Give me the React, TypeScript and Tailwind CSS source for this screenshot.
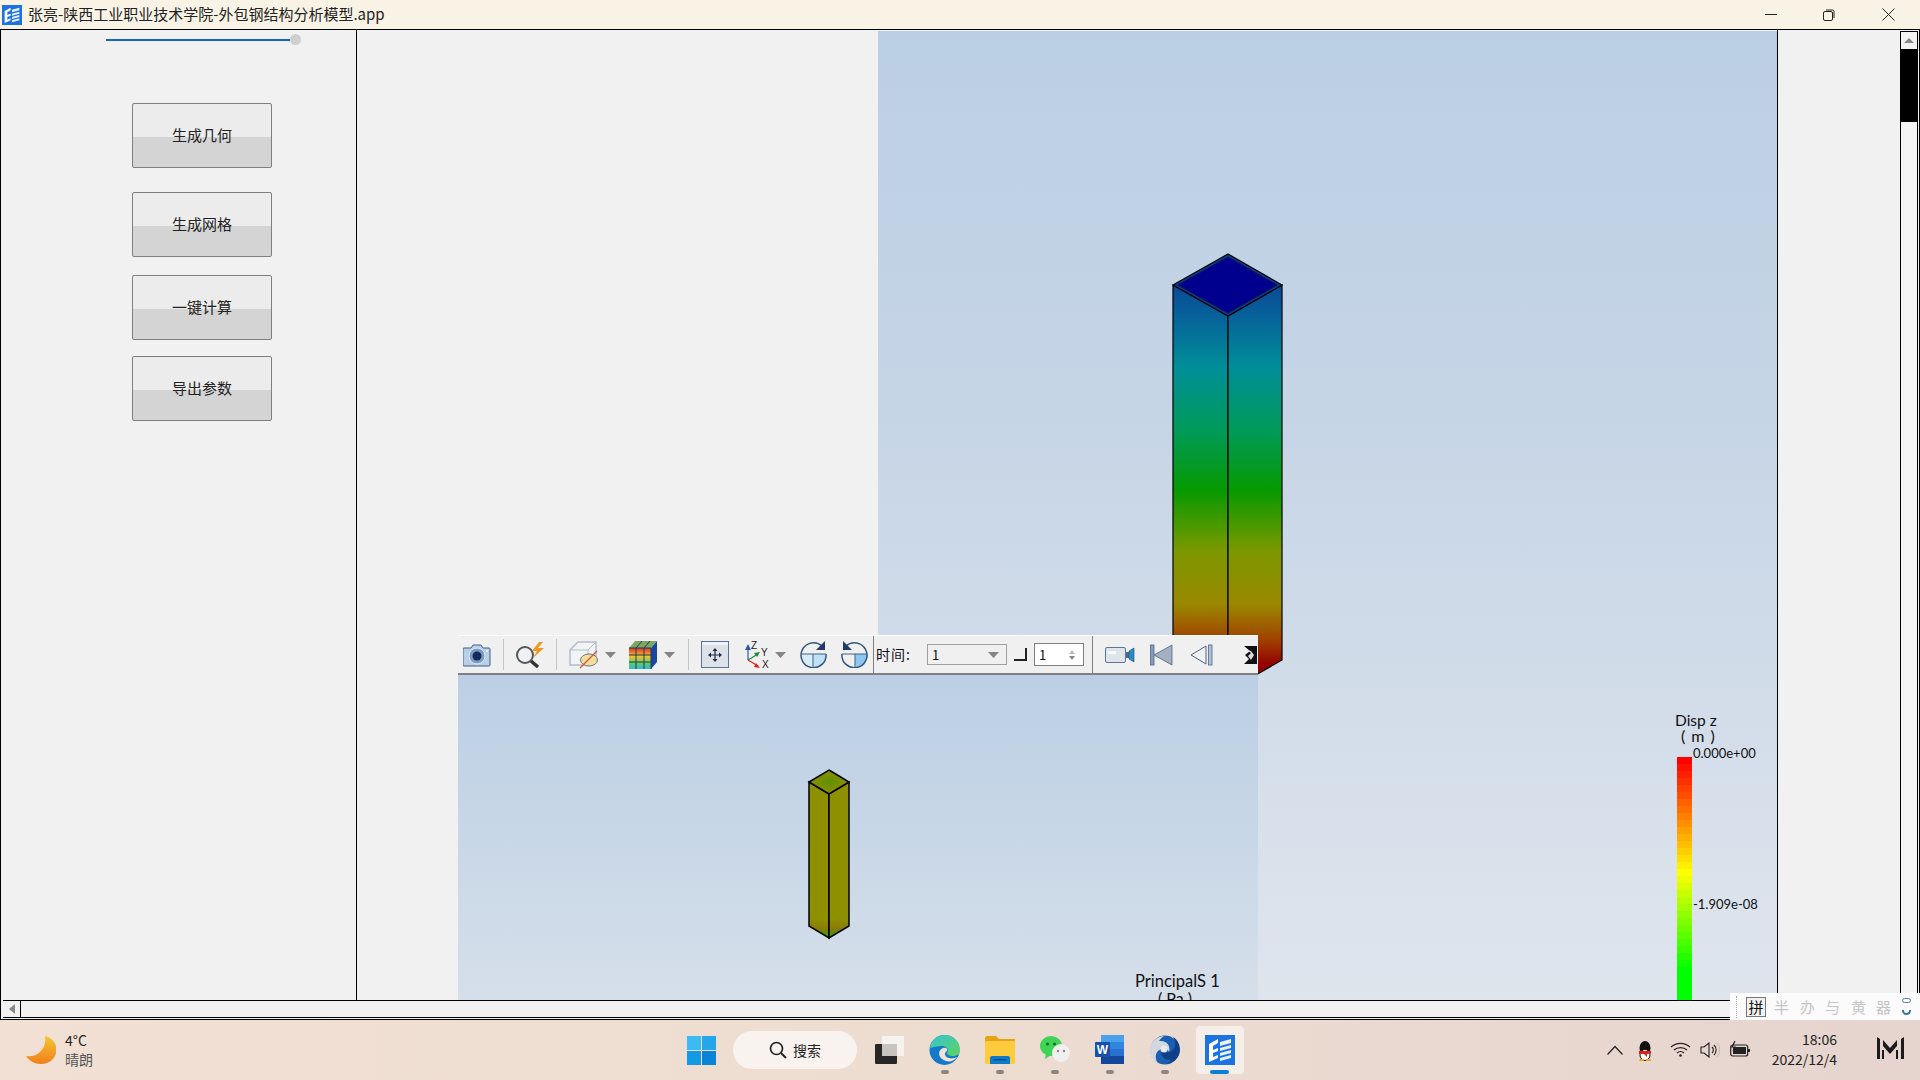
import React from 'react';

const FONT_UI = { fontFamily: '"Noto Sans CJK SC", "Noto Sans", sans-serif' };

// colour bar bands, red to yellow to green
const bandas = Array.from({ length: 35 }, (_, i) => {
  if (i <= 16) return `rgb(255,${Math.round((255 * i) / 16)},0)`;
  const r = Math.max(0, Math.round(255 * (1 - (i - 16) / 14)));
  return `rgb(${r},255,0)`;
});

const AppIcon = ({ size = 20 }: { size?: number }) => (
  <svg width={size} height={size} viewBox="0 0 30 30">
    <rect width="30" height="30" fill="#1a73e0" />
    <path d="M4 9l9-5v4L8 11v4l5-2v3l-5 2v4l5-2v3l-9 4z" fill="#fff" />
    <path d="M15 7l11-3v4l-11 3zM15 13l11-3v3l-11 3zM15 18l11-3v3l-11 3zM15 23l11-3v3l-11 3z" fill="#e8f1fc" />
  </svg>
);

const Separador = ({ className }: { className: string }) => <div className={`w-px h-[31px] bg-[#c4c4c4] ${className}`} />;

const Seta = ({ className }: { className: string }) => (
  <svg width="11" height="6" viewBox="0 0 11 6" className={className}>
    <path d="M0 0h11L5.500 6z" fill="#858585" />
  </svg>
);

const Botao = ({ texto, className }: { texto: string; className: string }) => (
  <button
    className={`self-start ml-[131px] w-[140px] h-[65px] shrink-0 rounded-[2px] border border-[#7f7f7f] bg-[linear-gradient(#ececec_0%,#ececec_52%,#d4d4d4_52%,#d4d4d4_100%)] text-[15px] text-[#222] ${className}`}
    style={FONT_UI}
  >
    {texto}
  </button>
);

const Toolbar = () => (
  <div className="h-[40px] flex items-center bg-[#f0f0f0] border-t border-t-white border-b-2 border-b-[#808080] overflow-hidden" style={FONT_UI}>
    {/* camera */}
    <svg width="28" height="24" viewBox="0 0 28 24" className="ml-[5px] shrink-0">
      <path d="M1 5h7l2-3h8l2 3h6a1 1 0 011 1v16a1 1 0 01-1 1H1a1 1 0 01-1-1V6a1 1 0 011-1z" fill="#b9cfe6" stroke="#3f5f8c" />
      <circle cx="14" cy="13" r="8" fill="#7d9ac0" stroke="#dfe9f4" />
      <circle cx="14" cy="13" r="4.500" fill="#13295c" />
      <circle cx="24" cy="8" r="1" fill="#fff" />
    </svg>
    <Separador className="ml-[12px]" />
    {/* magnifier and bolt */}
    <svg width="30" height="26" viewBox="0 0 30 26" className="ml-[11px] shrink-0">
      <circle cx="10" cy="13" r="8" fill="#eef2f6" stroke="#555" strokeWidth="2" />
      <path d="M16 19l7 6" stroke="#333" strokeWidth="3.500" />
      <path d="M24 0l-7 9h5l-4 7 11-10h-6l5-6z" fill="#ee9a22" />
    </svg>
    <Separador className="ml-[11px]" />
    {/* hidden cube */}
    <svg width="30" height="28" viewBox="0 0 30 28" className="ml-[12px] shrink-0">
      <path d="M1 9l8-8h18v15l-8 8H1z" fill="#f2f3f5" stroke="#b4bccb" strokeWidth="1.500" />
      <path d="M1 9h18v15M19 9l8-8" fill="none" stroke="#b4bccb" />
      <ellipse cx="20" cy="19" rx="8.500" ry="6" fill="#f0dd9a" stroke="#6d7686" />
      <path d="M11 27L28 10" stroke="#d05a3a" strokeWidth="1.200" />
    </svg>
    <Seta className="ml-[6px] shrink-0" />
    {/* colour cube */}
    <svg width="28" height="28" viewBox="0 0 28 28" className="ml-[13px] shrink-0">
      <defs>
        <linearGradient id="cuboFace" x1="0" y1="0" x2="0" y2="1">
          <stop offset="0" stopColor="#e0352a" />
          <stop offset="0.4" stopColor="#f2c233" />
          <stop offset="0.7" stopColor="#5ecf5a" />
          <stop offset="1" stopColor="#35b7d8" />
        </linearGradient>
      </defs>
      <path d="M0 7l6-7h22L22 7z" fill="#7ea663" />
      <path d="M22 7l6-7v21l-6 7z" fill="#1747a6" />
      <rect x="0" y="7" width="22" height="21" fill="url(#cuboFace)" />
      <path d="M7 7v21M15 7v21M0 14h22M0 21h22M0 7h22M22 7v21M7 7l6-7M15 7l6-7" stroke="#243a55" strokeWidth="1" fill="none" />
    </svg>
    <Seta className="ml-[7px] shrink-0" />
    <Separador className="ml-[13px]" />
    {/* fit view */}
    <svg width="28" height="27" viewBox="0 0 28 27" className="ml-[12px] shrink-0">
      <rect x="0.500" y="0.500" width="27" height="26" fill="#dde1e8" stroke="#5e7295" />
      <rect x="1" y="1" width="26" height="3" fill="#eef1f5" />
      <path d="M14 9v10M9 14h10" stroke="#1e2c44" strokeWidth="1.200" />
      <path d="M14 7l-2.500 3h5zM14 21l-2.500-3h5zM7 14l3-2.500v5zM21 14l-3-2.500v5z" fill="#1e2c44" />
    </svg>
    {/* axes */}
    <svg width="31" height="28" viewBox="0 0 31 28" className="ml-[15px] shrink-0">
      <path d="M4 19V5" stroke="#2a56b8" strokeWidth="1.200" />
      <path d="M4 3L1 9h6z" fill="#2a56b8" />
      <path d="M4 19l10-6" stroke="#1d8a3a" strokeWidth="1.200" />
      <path d="M16 11l-6 1 3 4z" fill="#1d8a3a" />
      <path d="M4 19l10 6" stroke="#e02020" strokeWidth="1.200" />
      <path d="M16 27l-6-1 2-4z" fill="#e02020" />
      <text x="7" y="8" fontSize="10" fill="#222" fontFamily="Liberation Sans">Z</text>
      <text x="17" y="15" fontSize="10" fill="#222" fontFamily="Liberation Sans">Y</text>
      <text x="18" y="27" fontSize="10" fill="#222" fontFamily="Liberation Sans">X</text>
    </svg>
    <Seta className="shrink-0" />
    {/* rotate */}
    <svg width="27" height="27" viewBox="0 0 27 27" className="ml-[14px] shrink-0">
      <path d="M1 13h12v13A13 13 0 011 13z" fill="#d8ecf8" />
      <path d="M13 13h13a13 13 0 01-13 13z" fill="#bfe0f5" />
      <path d="M1 13h25M13 13v13" stroke="#3c6488" />
      <path d="M22 5A12.500 12.500 0 1026 13" fill="none" stroke="#35597c" strokeWidth="1.500" />
      <path d="M25 0v9h-9z" fill="#1e3d66" />
    </svg>
    <svg width="27" height="27" viewBox="0 0 27 27" className="ml-[14px] shrink-0">
      <path d="M14 13H27a13 13 0 01-13 13z" fill="#8fc7ee" />
      <path d="M1 13h25M14 13v13" stroke="#3c6488" />
      <path d="M5 5A12.500 12.500 0 111 13" fill="none" stroke="#35597c" strokeWidth="1.500" />
      <path d="M2 0v9h9z" fill="#1e3d66" />
    </svg>
    <div className="w-px h-[38px] bg-[#808080] ml-[5px] shrink-0" />
    <span className="ml-[2px] text-[14px] tracking-[1px] text-[#111] shrink-0 w-[37px] whitespace-nowrap">时间:</span>
    <div className="ml-[14px] w-[80px] h-[21px] shrink-0 border border-[#a0a0a0] flex items-center justify-between pl-[4px] pr-[4px] text-[13px] leading-none text-[#111]">
      <span>1</span>
      <Seta className="mr-[3px]" />
    </div>
    <div className="ml-[7px] w-[13px] h-[13px] shrink-0 border-r-2 border-b-2 border-r-[#222] border-b-[#222] bg-[#f0f0f0]" />
    <div className="ml-[7px] w-[50px] h-[23px] shrink-0 bg-white border border-[#808080] flex items-center justify-between pl-[4px] pr-[8px] text-[13px] leading-none text-[#111]">
      <span>1</span>
      <div className="flex flex-col gap-[2px]">
        <div className="w-0 h-0 border-x-[3px] border-x-transparent border-b-[4px] border-b-[#bbb]" />
        <div className="w-0 h-0 border-x-[3px] border-x-transparent border-t-[4px] border-t-[#888]" />
      </div>
    </div>
    <div className="w-px h-[38px] bg-[#808080] ml-[8px] shrink-0" />
    <div className="w-[8px] shrink-0" />
    {/* video */}
    <svg width="30" height="18" viewBox="0 0 30 18" className="ml-[4px] shrink-0">
      <rect x="0.500" y="1.500" width="20" height="15" rx="1.500" fill="#dfe4ea" stroke="#5d7698" />
      <rect x="3" y="5" width="8" height="3" fill="#f8f8f8" />
      <path d="M21 6h3v6h-3z" fill="#4f6c90" />
      <path d="M24 5l5-3v14l-5-3z" fill="#2b8ac9" stroke="#234a73" strokeWidth="0.600" />
    </svg>
    <svg width="23" height="22" viewBox="0 0 23 22" className="ml-[15px] shrink-0">
      <rect x="0.500" y="1" width="3.500" height="20" fill="#8b9db6" stroke="#4c668a" strokeWidth="0.800" />
      <path d="M4 11L22 1v20z" fill="#a4afbf" stroke="#4c668a" strokeWidth="0.800" />
    </svg>
    <svg width="23" height="22" viewBox="0 0 23 22" className="ml-[17px] shrink-0">
      <path d="M1 11l15-9v18z" fill="#f0f0f0" stroke="#4c668a" />
      <rect x="18.500" y="1" width="3.500" height="20" fill="#b4c0d0" stroke="#4c668a" strokeWidth="0.800" />
    </svg>
    <svg width="13" height="18" viewBox="0 0 13 18" className="ml-[31px] shrink-0">
      <path d="M0 0h13v18H0l5-5-4-4 5-4z" fill="#111" />
      <path d="M3 4l4 3-3 3 3 4 3-5-3-4z" fill="#ddd" />
    </svg>
  </div>
);

const TorreGrande = () => (
  <svg width="899" height="969" viewBox="878 31 899 969" className="absolute left-0 top-0">
    <defs>
      <linearGradient id="torreEsq" gradientUnits="userSpaceOnUse" x1="0" y1="285" x2="0" y2="665">
        <stop offset="0" stopColor="#0a4a98" />
        <stop offset="0.08" stopColor="#06619a" />
        <stop offset="0.22" stopColor="#008f98" />
        <stop offset="0.38" stopColor="#009a5a" />
        <stop offset="0.54" stopColor="#069a00" />
        <stop offset="0.7" stopColor="#7c9800" />
        <stop offset="0.84" stopColor="#9a8800" />
        <stop offset="0.93" stopColor="#a04400" />
        <stop offset="1" stopColor="#950000" />
      </linearGradient>
    </defs>
    <path d="M1173 285L1228 316V691L1173 660z" fill="url(#torreEsq)" stroke="#000" strokeWidth="1.200" />
    <path d="M1282 285L1228 316V691L1282 660z" fill="url(#torreEsq)" stroke="#000" strokeWidth="1.200" />
    <path d="M1228 254L1282 285L1228 316L1173 285z" fill="#0b3c90" stroke="#000" strokeWidth="1.200" />
    <path d="M1228 257L1277 285L1228 313L1178 285z" fill="#00008f" stroke="#06164a" strokeWidth="1" />
  </svg>
);

const TorrePequena = () => (
  <svg width="800" height="325" viewBox="458 675 800 325" className="absolute left-0 top-[40px]">
    <defs>
      <radialGradient id="topoVerde">
        <stop offset="0" stopColor="#5f9000" />
        <stop offset="1" stopColor="#8f9000" />
      </radialGradient>
      <linearGradient id="baseTorre" gradientUnits="userSpaceOnUse" x1="0" y1="782" x2="0" y2="938">
        <stop offset="0" stopColor="#8f9000" />
        <stop offset="0.88" stopColor="#8f9000" />
        <stop offset="0.94" stopColor="#8a7a08" />
        <stop offset="1" stopColor="#20a010" />
      </linearGradient>
    </defs>
    <path d="M809 782L829 794V938L809 926z" fill="url(#baseTorre)" stroke="#000" strokeWidth="1.500" />
    <path d="M849 782L829 794V938L849 926z" fill="url(#baseTorre)" stroke="#000" strokeWidth="1.500" />
    <path d="M829 770L849 782L829 794L809 782z" fill="url(#topoVerde)" stroke="#000" strokeWidth="1.500" />
  </svg>
);

const Taskbar = () => (
  <div className="h-[60px] flex items-start bg-[linear-gradient(90deg,#f1e0d3,#eddcd0_50%,#e6d5cf)] relative" style={FONT_UI}>
    {/* weather */}
    <svg width="30" height="30" viewBox="0 0 30 30" className="ml-[26px] mt-[15px] shrink-0">
      <defs>
        <linearGradient id="lua" x1="0" y1="0" x2="0" y2="1">
          <stop offset="0" stopColor="#f6c530" />
          <stop offset="1" stopColor="#f0801c" />
        </linearGradient>
      </defs>
      <path d="M19 1a14 14 0 012 27C12 31 4 27 0 21c10 2 21-6 19-20z" fill="url(#lua)" />
    </svg>
    <div className="ml-[9px] mt-[11px] text-[14px] leading-[19px] w-[40px] shrink-0">
      <div className="text-[#222]">4°C</div>
      <div className="text-[#555]">晴朗</div>
    </div>
    {/* start */}
    <div className="ml-[582px] mt-[16px] grid grid-cols-2 gap-[1px] w-[29px] shrink-0">
      <div className="h-[14px] bg-[#3cbaf4]" />
      <div className="h-[14px] bg-[#25a5ea]" />
      <div className="h-[14px] bg-[#129ae6]" />
      <div className="h-[14px] bg-[#0b84d8]" />
    </div>
    {/* search */}
    <div className="ml-[17px] mt-[11px] w-[124px] h-[38px] rounded-full bg-[#f9f3ef] flex items-center justify-center gap-[6px] shrink-0 text-[14px] text-[#222]">
      <svg width="18" height="18" viewBox="0 0 18 18">
        <circle cx="7.500" cy="7.500" r="6" fill="none" stroke="#222" strokeWidth="1.700" />
        <path d="M12 12l5 5" stroke="#222" strokeWidth="2" />
      </svg>
      <span>搜索</span>
    </div>
    {/* task view */}
    <div className="relative ml-[18px] mt-[16px] w-[29px] h-[28px] shrink-0">
      <div className="absolute right-0 top-0 w-[22px] h-[20px] bg-[#f5f2f0] rounded-[1px]" />
      <div className="absolute left-0 bottom-0 w-[22px] h-[20px] bg-[#262626] rounded-[1px]" />
      <div className="absolute left-[7px] top-[8px] w-[15px] h-[12px] bg-[#c6c3c0]" />
    </div>
    {/* edge */}
    <svg width="31" height="30" viewBox="0 0 31 30" className="ml-[25px] mt-[15px] shrink-0">
      <defs>
        <linearGradient id="edgeA" x1="0" y1="0" x2="1" y2="1">
          <stop offset="0" stopColor="#32c5d8" />
          <stop offset="1" stopColor="#5fd35c" />
        </linearGradient>
      </defs>
      <circle cx="15.500" cy="15" r="15" fill="#1479c8" />
      <path d="M1 12C3 4 9 0 16 0c8 0 15 6 15 15 0 4-3 6-7 6-3 0-6-1-6-3 2-2 1-7-5-7-7 0-12 3-14 1z" fill="url(#edgeA)" />
      <path d="M13 24c-4-3-4-9 1-11 3-1 5 1 4 3-3 1-3 6 2 7 3 1 6 0 8-1-3 5-10 6-15 2z" fill="#f0e2d8" />
    </svg>
    {/* folder */}
    <svg width="30" height="28" viewBox="0 0 30 28" className="ml-[25px] mt-[16px] shrink-0">
      <path d="M0 2a2 2 0 012-2h9l3 3h16v6H0z" fill="#e5a413" />
      <rect x="0" y="5" width="30" height="23" rx="1" fill="#fdcb3c" />
      <path d="M5 28v-6a2 2 0 012-2h16a2 2 0 012 2v6z" fill="#0f79c9" />
      <rect x="9" y="23" width="12" height="1.500" fill="#0a4c86" />
    </svg>
    {/* wechat */}
    <svg width="30" height="27" viewBox="0 0 30 27" className="ml-[25px] mt-[16px] shrink-0">
      <ellipse cx="11" cy="10" rx="11" ry="10" fill="#3fd455" />
      <path d="M6 17l-1 6 6-4z" fill="#3fd455" />
      <circle cx="7.500" cy="8" r="1.500" fill="#146d28" />
      <circle cx="14.500" cy="8" r="1.500" fill="#146d28" />
      <circle cx="21" cy="17" r="9" fill="#f2f0ee" />
      <circle cx="18" cy="15" r="1.200" fill="#8a8a8a" />
      <circle cx="24" cy="15" r="1.200" fill="#8a8a8a" />
    </svg>
    {/* word */}
    <svg width="29" height="29" viewBox="0 0 29 29" className="ml-[25px] mt-[15px] shrink-0">
      <rect x="6" y="0" width="23" height="29" rx="1.500" fill="#2b6fd0" />
      <rect x="6" y="0" width="23" height="7" fill="#4ba0ec" />
      <rect x="6" y="7" width="23" height="7" fill="#2f86e0" />
      <rect x="6" y="21" width="23" height="8" fill="#14479c" />
      <rect x="0" y="7" width="15" height="15" rx="1" fill="#184fa8" />
      <text x="7.500" y="19" fontSize="12" fontWeight="700" fill="#fff" textAnchor="middle" fontFamily="Liberation Sans">W</text>
    </svg>
    {/* swirl */}
    <svg width="30" height="30" viewBox="0 0 30 30" className="ml-[26px] mt-[15px] shrink-0">
      <circle cx="15" cy="15" r="14.500" fill="#1a5fb0" />
      <path d="M15 1C6 1 0 8 0 15c0 6 3 12 8 14-3-5-3-10 0-13 4-4 10-3 11 1 2-6-2-12-10-11 2-3 4-5 6-5z" fill="#d4d8de" />
      <path d="M15 29c8 0 15-7 15-14 0-6-3-11-7-13 3 5 3 10 0 13-4 4-10 3-11-1-2 6 2 12 10 11-2 2-5 4-7 4z" fill="#0f3f88" />
      <circle cx="14" cy="14" r="3.500" fill="#e8ecef" />
    </svg>
    {/* running app */}
    <div className="ml-[16px] mt-[6px] w-[48px] h-[48px] rounded-[4px] bg-[#f6efe9] flex items-center justify-center shrink-0">
      <AppIcon size={30} />
    </div>
    <div className="absolute left-[1210px] top-[50px] w-[19px] h-[4px] rounded-full bg-[#0a7fd8]" />
    {[941, 996, 1051, 1106, 1161].map((x) => (
      <div key={x} className="absolute top-[50px] w-[8px] h-[4px] rounded-full bg-[#8d8580]" style={{ left: x }} />
    ))}
    {/* tray */}
    <svg width="16" height="10" viewBox="0 0 16 10" className="ml-[363px] mt-[25px] shrink-0">
      <path d="M0.500 9.500L8 1.500l7.500 8" fill="none" stroke="#222" strokeWidth="1.200" />
    </svg>
    <svg width="16" height="20" viewBox="0 0 16 20" className="ml-[14px] mt-[21px] shrink-0">
      <ellipse cx="8" cy="7" rx="5.500" ry="7" fill="#111" />
      <ellipse cx="8" cy="14" rx="5" ry="5.500" fill="#fff" stroke="#111" />
      <path d="M2 10h12v2.500L10 13v3l-3-3H2z" fill="#d8231f" />
      <path d="M3 18h4v2H2zM9 18h4l1 2H9z" fill="#f0a020" />
    </svg>
    <svg width="21" height="15" viewBox="0 0 21 15" className="ml-[17px] mt-[22px] shrink-0">
      <path d="M1 5a14 14 0 0119 0M4 8a10 10 0 0113 0M7 11a5 5 0 017 0" fill="none" stroke="#222" strokeWidth="1.300" />
      <circle cx="10.500" cy="13.500" r="1.300" fill="#222" />
    </svg>
    <svg width="20" height="16" viewBox="0 0 20 16" className="ml-[9px] mt-[22px] shrink-0">
      <path d="M1 5h3l5-4v14l-5-4H1z" fill="none" stroke="#222" strokeWidth="1.100" />
      <path d="M12 5a4 4 0 010 6M14 3a7 7 0 010 10" fill="none" stroke="#222" strokeWidth="1.100" />
      <path d="M17 1a10 10 0 010 14" fill="none" stroke="#bbb" strokeWidth="1" />
    </svg>
    <svg width="20" height="16" viewBox="0 0 20 16" className="ml-[10px] mt-[21px] shrink-0">
      <rect x="0.700" y="4" width="17" height="11" rx="2" fill="none" stroke="#222" strokeWidth="1.200" />
      <rect x="3" y="6" width="13" height="7" fill="#222" />
      <rect x="18" y="8" width="2" height="3" fill="#222" />
      <path d="M5 0L2 6h3L3 10" fill="none" stroke="#222" strokeWidth="1.200" />
    </svg>
    <div className="ml-[26px] mt-[9px] w-[61px] text-right text-[14px] leading-[20px] text-[#222] shrink-0">
      <div>18:06</div>
      <div className="whitespace-nowrap -ml-[6px]">2022/12/4</div>
    </div>
    {/* brand mark */}
    <svg width="27" height="22" viewBox="0 0 27 22" className="ml-[40px] mt-[17px] shrink-0">
      <path d="M0 0l3 2v20H0zM6 3l7 8 7-8v6l-7 8-7-8zM7 13v9H5v-9zM21 13v9h-2v-9zM27 0v22h-3V2z" fill="#1b1b1b" />
    </svg>
  </div>
);

export default function App() {
  return (
    <div className="w-[1920px] h-[1080px] flex flex-col overflow-hidden relative bg-[#f1f1f1]" style={FONT_UI}>
      {/* title bar */}
      <div className="h-[29px] shrink-0 bg-[#f9f3e5] flex items-center pl-[2px]">
        <AppIcon />
        <span className="ml-[6px] text-[15px] text-[#222] whitespace-nowrap">张亮-陕西工业职业技术学院-外包钢结构分析模型.app</span>
        <div className="ml-auto flex items-center">
          <div className="w-[12px] h-px bg-[#222] mr-[46px]" />
          <svg width="12" height="12" viewBox="0 0 12 12" className="mr-[47px]">
            <rect x="0.500" y="2.500" width="9" height="9" rx="1.500" fill="none" stroke="#222" />
            <path d="M3 1h6.500A1.500 1.500 0 0111 2.500V9" fill="none" stroke="#222" />
          </svg>
          <svg width="13" height="13" viewBox="0 0 13 13" className="mr-[25px]">
            <path d="M0.500 0.500l12 12M12.500 0.500l-12 12" stroke="#222" />
          </svg>
        </div>
      </div>

      {/* window body */}
      <div className="h-[991px] shrink-0 flex flex-col border border-black">
        <div className="flex h-[970px] shrink-0">
          {/* left panel */}
          <div className="w-[356px] shrink-0 border-r border-black flex flex-col items-center pt-[4px] pr-[3px]">
            <div className="flex items-center self-start ml-[105px]">
              <div className="w-[184px] h-[2px] bg-[#0e67bb]" />
              <div className="w-[11px] h-[11px] rounded-full bg-[#cfcfcf]" />
            </div>
            <Botao texto="生成几何" className="mt-[58px]" />
            <Botao texto="生成网格" className="mt-[24px]" />
            <Botao texto="一键计算" className="mt-[18px]" />
            <Botao texto="导出参数" className="mt-[16px]" />
          </div>

          {/* plots */}
          <div className="relative w-[1421px] shrink-0 border-r border-black">
            <div className="absolute left-[521px] top-px w-[899px] bottom-0 bg-[linear-gradient(#bbcfe4,#c6d5e6_40%,#dfe5ed)] overflow-hidden">
              <TorreGrande />
              <div className="absolute left-[775px] top-[681px] w-[110px] h-[304px] text-[#111]" style={{ fontFamily: 'Lato, sans-serif' }}>
                <div className="absolute left-[22px] top-[0px] text-[15.500px] leading-[17px] whitespace-nowrap">Disp z</div>
                <div className="absolute left-[28px] top-[15px] text-[16px] tracking-[1px] leading-[17px] whitespace-nowrap">( m )</div>
                <div className="absolute left-[40px] top-[34px] text-[13px] leading-[15px] whitespace-nowrap">0.000e+00</div>
                <div className="absolute left-[40px] top-[185px] text-[13px] leading-[15px] whitespace-nowrap">-1.909e-08</div>
                <div className="absolute left-[24px] top-[45px] w-[15px] flex flex-col">
                  {bandas.map((cor, i) => (
                    <div key={i} className="h-[7px] shrink-0" style={{ backgroundColor: cor }} />
                  ))}
                </div>
              </div>
            </div>

            <div className="absolute left-[101px] top-[605px] w-[800px] h-[365px] bg-[linear-gradient(#bbcfe4_10%,#d5dfea)] overflow-hidden">
              <Toolbar />
              <TorrePequena />
              <div className="absolute left-[677px] top-[338px] text-[16.500px] leading-[17px] text-[#111] whitespace-nowrap" style={{ fontFamily: 'Lato, sans-serif' }}>
                PrincipalS 1
              </div>
              <div className="absolute left-[700px] top-[354px] text-[16px] leading-[17px] text-[#111] whitespace-nowrap" style={{ fontFamily: 'Lato, sans-serif' }}>
                ( Pa )
              </div>
            </div>
          </div>

          {/* right panel and scrollbar */}
          <div className="w-[122px] shrink-0" />
          <div className="w-[18px] shrink-0 mt-px border border-black flex flex-col bg-[#f4f4f4]">
            <div className="h-[17px] shrink-0 bg-[#f4f4f4] flex items-center justify-center">
              <div className="w-0 h-0 border-x-[5px] border-x-transparent border-b-[5px] border-b-[#888]" />
            </div>
            <div className="h-[73px] shrink-0 bg-black" />
            <div className="flex-1" />
          </div>
        </div>

        {/* horizontal scrollbar */}
        <div className="h-[18px] shrink-0 border-y border-black flex ml-[2px]">
          <div className="w-[18px] border-r border-black flex items-center justify-center">
            <div className="w-0 h-0 border-y-[5px] border-y-transparent border-r-[6px] border-r-[#888]" />
          </div>
        </div>
      </div>

      <Taskbar />

      {/* IME bar */}
      <div className="absolute left-[1730px] top-[993px] w-[190px] h-[27px] bg-[#fbfbfb] flex items-center text-[15px] leading-none text-[#c4c4c4]">
        <div className="ml-[6px] w-px h-[22px] border-l border-dotted border-[#aaa]" />
        <div className="ml-[9px] w-[20px] h-[20px] border border-[#777] bg-[#f2f2f2] text-[#111] flex items-center justify-center">拼</div>
        <span className="ml-[8px]">半</span>
        <span className="ml-[11px]">办</span>
        <span className="ml-[10px]">与</span>
        <span className="ml-[11px]">黄</span>
        <span className="ml-[10px]">器</span>
        <div className="ml-[11px] flex flex-col gap-[7px]">
          <div className="w-[9px] h-[5px] rounded-full border border-[#5a7ea0]" />
          <div className="w-[9px] h-[5px] rounded-b-full border-x-2 border-b-2 border-[#3f6fa8]" />
        </div>
      </div>
    </div>
  );
}
